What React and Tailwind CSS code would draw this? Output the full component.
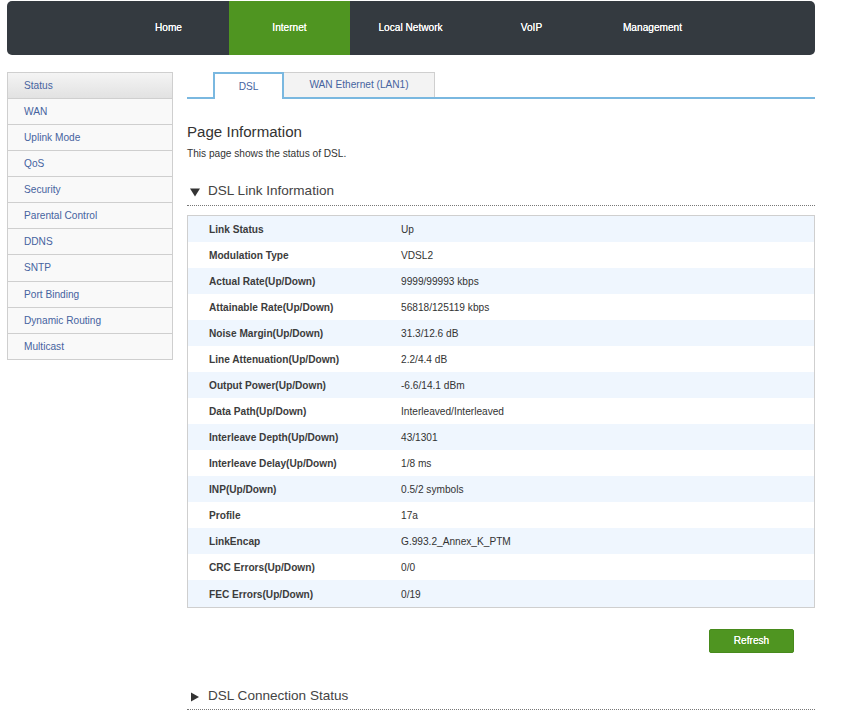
const NAV = ['Home', 'Internet', 'Local Network', 'VoIP', 'Management']
const SIDE = ['Status', 'WAN', 'Uplink Mode', 'QoS', 'Security', 'Parental Control', 'DDNS', 'SNTP', 'Port Binding', 'Dynamic Routing', 'Multicast']
const ROWS = [
  ['Link Status', 'Up'],
  ['Modulation Type', 'VDSL2'],
  ['Actual Rate(Up/Down)', '9999/99993 kbps'],
  ['Attainable Rate(Up/Down)', '56818/125119 kbps'],
  ['Noise Margin(Up/Down)', '31.3/12.6 dB'],
  ['Line Attenuation(Up/Down)', '2.2/4.4 dB'],
  ['Output Power(Up/Down)', '-6.6/14.1 dBm'],
  ['Data Path(Up/Down)', 'Interleaved/Interleaved'],
  ['Interleave Depth(Up/Down)', '43/1301'],
  ['Interleave Delay(Up/Down)', '1/8 ms'],
  ['INP(Up/Down)', '0.5/2 symbols'],
  ['Profile', '17a'],
  ['LinkEncap', 'G.993.2_Annex_K_PTM'],
  ['CRC Errors(Up/Down)', '0/0'],
  ['FEC Errors(Up/Down)', '0/19'],
]

function Arrow({ open }) {
  return (
    <svg width="10" height="10" viewBox="0 0 10 10" className="shrink-0">
      <path d={open ? 'M0 1.5H10L5 9.5Z' : 'M1 0.5L9 5L1 9.5Z'} fill="#333" />
    </svg>
  )
}

export default function App() {
  return (
    <div className="w-[844px] h-[720px] overflow-hidden bg-white pt-px pl-[7px] font-['Liberation_Sans',Arial,sans-serif] text-[#333]">
      <div className="w-[808px] h-[54px] bg-[#343a40] rounded-[5px] pl-[101px] flex overflow-hidden">
        {NAV.map((n, i) => (
          <div key={n} className={`w-[121px] flex items-center justify-center text-[10.13px] text-white [text-shadow:0_0_0.5px_#fff] ${i === 1 ? 'bg-[#4f9521]' : ''}`}>
            {n}
          </div>
        ))}
      </div>

      <div className="flex mt-[17px]">
        <div className="w-[166px] h-[288px] border border-[#cfcfcf] bg-[#f9f9f9] shrink-0">
          {SIDE.map((s, i) => (
            <div key={s} className={`${i === 7 ? 'h-[27px]' : i === 10 ? 'h-[25px]' : 'h-[26px]'} pl-[16px] flex items-center text-[10.13px] text-[#46639f] border-b border-[#cfcfcf] last:border-b-0 ${i === 0 ? 'bg-gradient-to-b from-[#f4f4f4] to-[#e2e2e2]' : ''}`}>
              {s}
            </div>
          ))}
        </div>

        <div className="w-[628px] ml-[14px]">
          <div className="h-[27px] flex pl-[26px] border-b-2 border-[#7ab8e0]">
            <div className="w-[71px] h-[27px] border-2 border-b-0 border-[#7ab8e0] bg-white flex items-center justify-center text-[10.13px] text-[#46639f]">DSL</div>
            <div className="w-[151px] h-[25px] border border-l-0 border-b-0 border-[#cfcfcf] bg-[#f3f3f3] flex items-center justify-center text-[10.13px] text-[#46639f]">WAN Ethernet (LAN1)</div>
          </div>

          <h1 className="mt-[23px] h-[20px] leading-[20px] text-[15.1px] font-normal">Page Information</h1>
          <p className="mt-[5px] h-[14px] leading-[14px] text-[10.13px]">This page shows the status of DSL.</p>

          <div className="mt-[15px] h-[30px] flex items-center gap-[8px] pl-[3px] pt-[2px] border-b border-dotted border-[#777] text-[13.55px] text-[#444]">
            <Arrow open />
            <span>DSL Link Information</span>
          </div>

          <div className="mt-[9px] border border-[#cfcfcf]">
            {ROWS.map(([k, v], i) => (
              <div key={k} className={`h-[26px] last:h-[27px] pt-[2px] flex items-center text-[10.13px] ${i % 2 === 0 ? 'bg-[#eff6fe]' : 'bg-white'}`}>
                <div className="w-[213px] pl-[21px] font-bold text-[#3c3c3c]">{k}</div>
                <div>{v}</div>
              </div>
            ))}
          </div>

          <div className="flex justify-end pr-[21px] mt-[21px]">
            <button className="w-[85px] h-[24px] rounded-[2px] bg-[#4f9521] border border-[#478a1c] text-[10.13px] text-white [text-shadow:0_0_0.5px_#fff]">Refresh</button>
          </div>

          <div className="mt-[27px] h-[30px] flex items-center gap-[8px] pl-[3px] pt-[4px] border-b border-dotted border-[#777] text-[13.55px] text-[#444]">
            <Arrow />
            <span>DSL Connection Status</span>
          </div>
        </div>
      </div>
    </div>
  )
}
